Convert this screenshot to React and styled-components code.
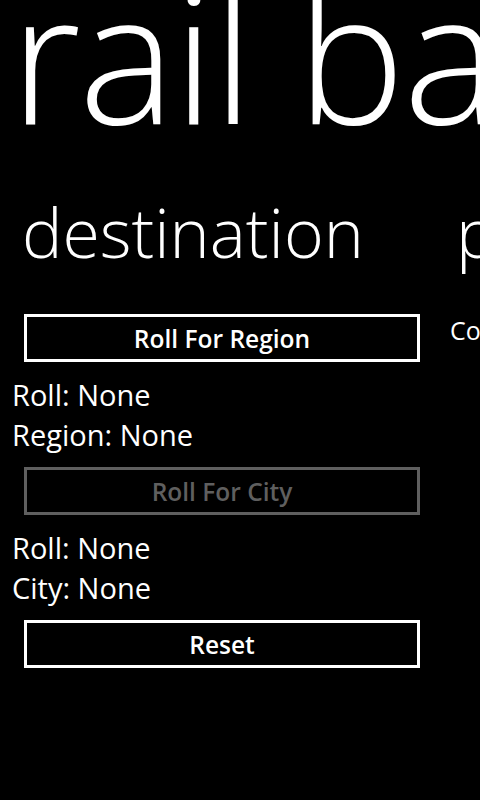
import React from "react";
import styled, { createGlobalStyle } from "styled-components";

const Global = createGlobalStyle`
  html, body { margin: 0; padding: 0; background: #000; }
  body { font-family: "Open Sans", "Noto Sans", sans-serif; color: #fff; }
`;

const Screen = styled.div`
  width: 480px;
  height: 800px;
  overflow: hidden;
  background: #000;
  display: flex;
  flex-direction: column;
`;

const Title = styled.h1`
  margin: -38px 0 0 10px;
  font-size: 182px;
  font-weight: 300;
  line-height: 1;
  white-space: nowrap;
  letter-spacing: -2px;
`;

const Items = styled.div`
  display: flex;
  gap: 18px;
  padding-left: 12px;
  margin-top: 40px;
`;

const Item = styled.section`
  flex: 0 0 420px;
  display: flex;
  flex-direction: column;
`;

const Header = styled.h2`
  margin: 0 0 0 ${(p) => p.$indent || 10}px;
  font-size: 68px;
  font-weight: 300;
  line-height: 96px;
  white-space: nowrap;
`;

const Content = styled.div`
  display: flex;
  flex-direction: column;
  margin-top: 34px;
`;

const Button = styled.button`
  margin: 0 12px;
  height: 48px;
  box-sizing: border-box;
  background: transparent;
  border: 3px solid ${(p) => (p.disabled ? "#5f5f5f" : "#fff")};
  color: ${(p) => (p.disabled ? "#5f5f5f" : "#fff")};
  font-family: "Open Sans", "Noto Sans", sans-serif;
  font-weight: 600;
  font-size: 24.5px;
  padding: 0;
`;

const Label = styled.div`
  font-size: 29px;
  line-height: 40px;
  white-space: nowrap;
`;

const Group = styled.div`
  display: flex;
  flex-direction: column;
  margin: 13px 0 12px;
`;

const SideText = styled.div`
  font-size: 25px;
  line-height: 34px;
  white-space: nowrap;
  margin-top: -1px;
`;

export default function App() {
  return (
    <>
      <Global />
      <Screen>
        <Title>rail baron</Title>
        <Items>
          <Item>
            <Header>destination</Header>
            <Content>
              <Button>Roll For Region</Button>
              <Group>
                <Label>Roll: None</Label>
                <Label>Region: None</Label>
              </Group>
              <Button disabled>Roll For City</Button>
              <Group>
                <Label>Roll: None</Label>
                <Label>City: None</Label>
              </Group>
              <Button>Reset</Button>
            </Content>
          </Item>
          <Item>
            <Header $indent={6}>payouts</Header>
            <Content>
              <SideText>Compute payout</SideText>
            </Content>
          </Item>
        </Items>
      </Screen>
    </>
  );
}
